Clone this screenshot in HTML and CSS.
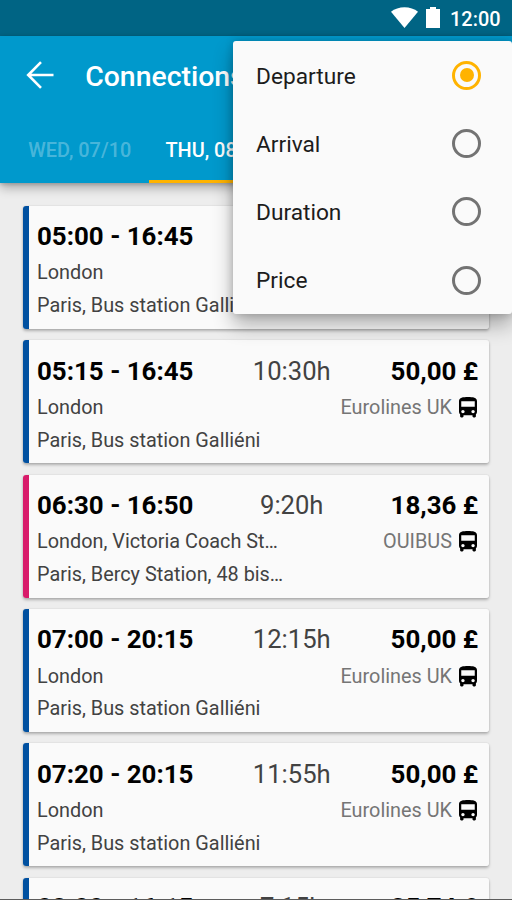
FILE: index.html
```html
<!DOCTYPE html>
<html lang="en">
<head>
<meta charset="utf-8">
<title>Connections</title>
<link rel="stylesheet" href="styles.css">
</head>
<body>
<svg class="defs" width="0" height="0">
  <symbol id="bus" viewBox="4 2 16 20" preserveAspectRatio="none">
    <path fill-rule="evenodd" d="M4 16c0 .88.39 1.67 1 2.220V20c0 .55.45 1 1 1h1c.55 0 1-.45 1-1v-1h8v1c0 .55.450 1 1 1h1c.55 0 1-.45 1-1v-1.780c.61-.55 1-1.340 1-2.220V6c0-3.500-3.580-4-8-4s-8 .5-8 4v10zm3.500 1c-.83 0-1.500-.67-1.500-1.500S6.670 14 7.500 14s1.500.67 1.500 1.500S8.330 17 7.500 17zm9 0c-.83 0-1.500-.67-1.500-1.500s.67-1.500 1.500-1.500 1.500.67 1.500 1.500-.67 1.500-1.500 1.500zm1.500-6H6V6h12v5z"/>
  </symbol>
</svg>
<div class="screen">
  <div class="status">
    <svg class="wifi" viewBox="0 0 27 21"><path d="M0 4.800C7-1.400 20-1.400 27 4.800L13.500 21z"/></svg>
    <svg class="battery" viewBox="0 0 14 21"><path d="M4 0h6v2h4v19H0V2h4z"/></svg>
    <span class="clock">12:00</span>
  </div>
  <header class="appbar">
    <div class="toolbar">
      <svg class="back" viewBox="0 0 28 28"><path d="M15 1.200 2.200 14 15 26.800M2.200 14H27.500"/></svg>
      <h1 class="title">Connections</h1>
    </div>
    <nav class="tabs">
      <div class="tab">WED, 07/10</div>
      <div class="tab active">THU, 08/10</div>
    </nav>
  </header>
  <main class="list">
    <article class="card">
      <div class="row main"><b class="time">05:00 - 16:45</b><span class="duration">11:45h</span><b class="price">50,00 £</b></div>
      <div class="row"><span class="place">London</span><span class="carrier">Eurolines UK</span><svg class="bus"><use href="#bus"/></svg></div>
      <div class="row"><span class="place">Paris, Bus station Galliéni</span></div>
    </article>
    <article class="card">
      <div class="row main"><b class="time">05:15 - 16:45</b><span class="duration">10:30h</span><b class="price">50,00 £</b></div>
      <div class="row"><span class="place">London</span><span class="carrier">Eurolines UK</span><svg class="bus"><use href="#bus"/></svg></div>
      <div class="row"><span class="place">Paris, Bus station Galliéni</span></div>
    </article>
    <article class="card ouibus">
      <div class="row main"><b class="time">06:30 - 16:50</b><span class="duration">9:20h</span><b class="price">18,36 £</b></div>
      <div class="row"><span class="place">London, Victoria Coach St…</span><span class="carrier">OUIBUS</span><svg class="bus"><use href="#bus"/></svg></div>
      <div class="row"><span class="place">Paris, Bercy Station, 48 bis…</span></div>
    </article>
    <article class="card">
      <div class="row main"><b class="time">07:00 - 20:15</b><span class="duration">12:15h</span><b class="price">50,00 £</b></div>
      <div class="row"><span class="place">London</span><span class="carrier">Eurolines UK</span><svg class="bus"><use href="#bus"/></svg></div>
      <div class="row"><span class="place">Paris, Bus station Galliéni</span></div>
    </article>
    <article class="card">
      <div class="row main"><b class="time">07:20 - 20:15</b><span class="duration">11:55h</span><b class="price">50,00 £</b></div>
      <div class="row"><span class="place">London</span><span class="carrier">Eurolines UK</span><svg class="bus"><use href="#bus"/></svg></div>
      <div class="row"><span class="place">Paris, Bus station Galliéni</span></div>
    </article>
    <article class="card last">
      <div class="row main"><b class="time">08:00 - 16:15</b><span class="duration">7:15h</span><b class="price">25,74 £</b></div>
    </article>
  </main>
  <div class="menu">
    <div class="option"><span>Departure</span><span class="radio checked"></span></div>
    <div class="option"><span>Arrival</span><span class="radio"></span></div>
    <div class="option"><span>Duration</span><span class="radio"></span></div>
    <div class="option"><span>Price</span><span class="radio"></span></div>
  </div>
</div>
</body>
</html>
```
FILE: styles.css
```css
* { box-sizing: border-box; }
body { margin: 0; font-family: Roboto, sans-serif; }
.defs { position: absolute; }
.screen {
  position: relative;
  display: flex;
  flex-direction: column;
  width: 512px;
  height: 900px;
  overflow: hidden;
  background: #ededed;
  border-bottom: 1px solid #5c5c5c;
}
.status {
  flex: none;
  display: flex;
  align-items: center;
  justify-content: flex-end;
  height: 35.500px;
  padding-right: 11.500px;
  background: #006484;
  color: #fff;
}
.status svg { fill: #fff; height: 21px; }
.wifi { width: 27px; }
.battery { width: 14px; margin: 0 10px 0 8.500px; }
.clock { font-size: 19.900px; font-weight: 500; line-height: 34px; padding-top: 4px; }
.appbar {
  flex: none;
  height: 147.500px;
  background: #0099cc;
  box-shadow: 0 5px 10px rgba(0, 0, 0, .28), 0 1px 4px rgba(0, 0, 0, .2);
  color: #fff;
  z-index: 1;
}
.toolbar {
  display: flex;
  align-items: center;
  height: 79.500px;
  padding-left: 26px;
}
.back { width: 28px; height: 28px; fill: none; stroke: #fff; stroke-width: 2.600; }
.title {
  margin: 4px 0 0 31.200px;
  font-size: 28.400px;
  font-weight: 500;
  line-height: 36px;
}
.tabs { display: flex; height: 68px; padding-left: 11px; }
.tab {
  flex: none;
  width: 137.500px;
  padding-top: 22px;
  text-align: center;
  font-size: 19.900px;
  font-weight: 500;
  line-height: 28px;
  color: rgba(255, 255, 255, .3);
}
.tab.active { padding-right: 2px; color: #fff; border-bottom: 3px solid #ffb300; }
.list {
  display: flex;
  flex-direction: column;
  gap: 11.400px;
  padding: 22.900px 22.800px 0 22.800px;
}
.card {
  flex: none;
  height: 123px;
  padding: 15.300px 11px 0 14.200px;
  border-radius: 3px;
  background: linear-gradient(to right, #0050a0 5.700px, #fafafa 5.700px);
  box-shadow: 0 2px 3px rgba(0, 0, 0, .26), 0 0 2px rgba(0, 0, 0, .12);
}
.card.last { padding-top: 14.500px; }
.card.ouibus { background: linear-gradient(to right, #d81b6a 5.700px, #fafafa 5.700px); }
.row { display: flex; align-items: center; height: 32.800px; font-size: 19.850px; line-height: 32px; color: #424242; }
.row.main {
  display: grid;
  grid-template-columns: 187px 135.500px 1fr;
  height: 30px;
  margin-bottom: 5.800px;
  font-size: 25.600px;
  line-height: 30px;
}
.time, .price { color: #000; font-size: 25.900px; font-weight: 700; white-space: nowrap; }
.duration { text-align: center; }
.price { text-align: right; }
.place { flex: 1; }
.carrier { color: #757575; }
.bus { width: 18px; height: 21.500px; margin: 0 1.200px 0 7px; fill: #000; }
.menu {
  position: absolute;
  top: 41px;
  left: 233px;
  width: 279px;
  height: 273.400px;
  border-radius: 3px;
  background: #fafafa;
  box-shadow: 0 11px 20px rgba(0, 0, 0, .3), 0 0 8px rgba(0, 0, 0, .2);
  z-index: 2;
}
.option {
  display: flex;
  align-items: center;
  justify-content: space-between;
  height: 68.250px;
  padding: 0 31px 0 23px;
  font-size: 22.700px;
  color: #1c1c1c;
}
.option span:first-child { padding-top: 2px; }
.radio {
  display: flex;
  width: 29px;
  height: 29px;
  margin-top: .5px;
  border: 3px solid #737373;
  border-radius: 50%;
}
.radio.checked { border-color: #ffb300; }
.radio.checked::before {
  content: "";
  width: 14px;
  height: 14px;
  margin: auto;
  border-radius: 50%;
  background: #ffb300;
}
```
